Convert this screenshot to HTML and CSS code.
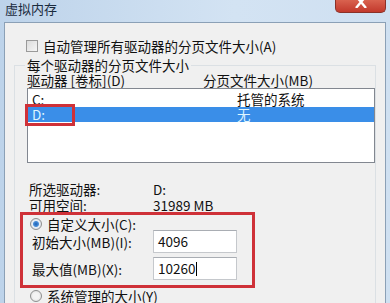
FILE: index.html
```html
<!DOCTYPE html>
<html lang="zh-CN">
<head>
  <meta charset="UTF-8">
  <meta name="viewport" content="width=device-width, initial-scale=1.0">
  <title>虚拟内存</title>
  <link rel="stylesheet" href="styles.css">
</head>
<body>
  <div class="window">
    <div class="titlebar">
      <span class="title">虚拟内存</span>
      <span class="close">
        <svg width="12" height="8" viewBox="0 0 12 8"><path d="M1 -4 L11 8 M11 -4 L1 8" stroke="#fff" stroke-width="2.4" fill="none"/></svg>
      </span>
    </div>
    <div class="panel">
      <div class="auto-row"><span class="checkbox"></span>自动管理所有驱动器的分页文件大小(A)</div>
      <fieldset class="group">
        <legend>每个驱动器的分页文件大小</legend>
        <div class="list-head"><span class="head-drive">驱动器 [卷标](D)</span><span>分页文件大小(MB)</span></div>
        <div class="listbox">
          <div class="row"><span class="col-drive">C:</span><span>托管的系统</span></div>
          <div class="row selected"><span class="col-drive">D:</span><span>无</span></div>
          <span class="mark mark-drive"></span>
        </div>
        <div class="info">
          <div class="info-row"><span class="info-label">所选驱动器:</span><span>D:</span></div>
          <div class="info-row"><span class="info-label">可用空间:</span><span>31989 MB</span></div>
        </div>
        <div class="custom">
          <div class="radio-row"><span class="radio checked"></span>自定义大小(C):</div>
          <div class="field-row first"><span class="field-label">初始大小(MB)(I):</span><span class="input">4096</span></div>
          <div class="field-row"><span class="field-label">最大值(MB)(X):</span><span class="input">10260<span class="caret"></span></span></div>
          <span class="mark mark-custom"></span>
        </div>
        <div class="radio-row system"><span class="radio"></span>系统管理的大小(Y)</div>
      </fieldset>
    </div>
  </div>
</body>
</html>
```

FILE: styles.css
```css
body {
  margin: 0;
  font-family: "Noto Sans CJK SC", "Noto Sans", sans-serif;
  font-size: 13.5px;
  color: #111;
  background-color: #cddff0;
}

.window {
  width: 390px;
  height: 303px;
  overflow: hidden;
  background: linear-gradient(to right, #bdd3ea, #d3e3f3 60%, #cfe0f1);
}

.titlebar {
  height: 22px;
  display: flex;
  justify-content: space-between;
  align-items: flex-start;
}

.title {
  margin: 1px 0 0 5px;
  font-size: 13px;
  line-height: 16px;
  color: #1b2b3d;
}

.close {
  width: 49px;
  height: 12px;
  margin-right: 4px;
  border: 1px solid #8a3128;
  border-top: none;
  border-radius: 0 0 5px 5px;
  background: linear-gradient(to bottom, #d9624f, #c2392c);
  display: flex;
  justify-content: center;
  align-items: flex-start;
}

.panel {
  margin: 0 4px;
  height: 290px;
  border: 1px solid #8ba0b6;
  background-color: #f0f0f0;
  padding: 0 9px;
}

.auto-row {
  margin-top: 15px;
  padding-left: 12px;
  height: 16px;
  line-height: 16px;
  display: flex;
  align-items: center;
}

.checkbox {
  width: 10px;
  height: 10px;
  margin-right: 5px;
  border: 1px solid #9a9a9a;
  background: linear-gradient(135deg, #dcdcdc, #f6f6f6);
}

.group {
  margin: 3px 0 0;
  padding: 0 0 0 12px;
  border: 1px solid #dbe0e4;
  border-bottom: none;
  min-width: 0;
}

.group legend {
  padding: 0 2px;
  margin-left: -2px;
  line-height: 16px;
}

.list-head {
  height: 15px;
  line-height: 15px;
  display: flex;
}

.head-drive {
  width: 176px;
}

.listbox {
  position: relative;
  height: 70px;
  border: 1px solid #828790;
  background-color: #fff;
  padding-top: 3px;
}

.row {
  height: 15px;
  line-height: 15px;
  padding-left: 4px;
  display: flex;
}

.col-drive {
  width: 205px;
}

.row.selected {
  background-color: #3a8ee8;
  color: #dff6ff;
}

.mark {
  position: absolute;
  border: 3px solid #cf3138;
}

.mark-drive {
  left: -3px;
  top: 15px;
  width: 44px;
  height: 16px;
}

.info {
  margin-top: 18px;
}

.info-row {
  height: 16px;
  line-height: 16px;
  display: flex;
}

.info-label {
  width: 124px;
  margin-left: 2px;
}

.custom {
  position: relative;
  margin-top: 4px;
}

.radio-row {
  height: 14px;
  line-height: 14px;
  display: flex;
  align-items: center;
}

.radio {
  width: 10px;
  height: 10px;
  margin: 0 5px 0 3px;
  border: 1px solid #8e8f8f;
  border-radius: 50%;
  background: radial-gradient(circle, #f4f4f4 40%, #d8d8d8);
}

.radio.checked {
  background: radial-gradient(circle, #1d5fb5 0, #4a8fd8 2.5px, #e8eef5 3.5px, #d4d9df 100%);
}

.field-row {
  display: flex;
  align-items: center;
  margin-top: 4px;
}

.field-row.first {
  margin-top: -1px;
}

.field-label {
  width: 121px;
  margin-left: 5px;
}

.input {
  width: 78px;
  height: 21px;
  line-height: 21px;
  padding-left: 4px;
  border: 1px solid #c5c8cc;
  border-top-color: #a9adb3;
  background-color: #fff;
  display: flex;
  align-items: center;
}

.caret {
  width: 1px;
  height: 14px;
  background-color: #000;
  margin-left: 1px;
}

.mark-custom {
  left: -7px;
  top: -5px;
  width: 229px;
  height: 70px;
}

.radio-row.system {
  margin-top: 9px;
}
```
